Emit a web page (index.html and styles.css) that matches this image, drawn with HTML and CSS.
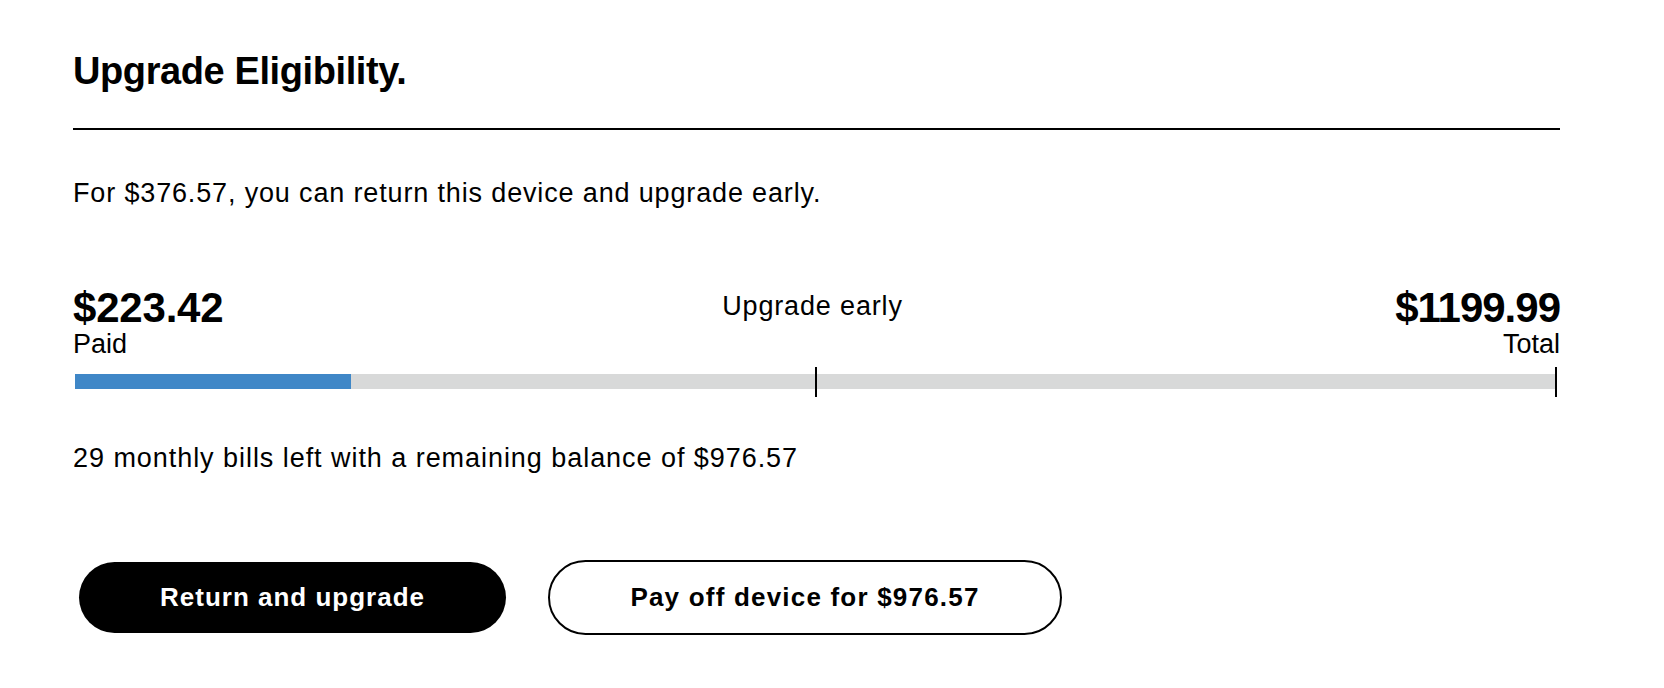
FILE: index.html
```html
<!DOCTYPE html>
<html lang="en">
<head>
<meta charset="utf-8">
<title>Upgrade Eligibility</title>
<link rel="stylesheet" href="styles.css">
</head>
<body>
<section class="card">
  <h1 class="title">Upgrade Eligibility.</h1>
  <div class="rule"></div>
  <p class="lead">For $376.57, you can return this device and upgrade early.</p>

  <div class="progress">
    <div class="amounts">
      <div class="amount-col">
        <div class="amount">$223.42</div>
        <div class="amount-label">Paid</div>
      </div>
      <div class="milestone">Upgrade early</div>
      <div class="amount-col right">
        <div class="amount narrow">$1199.99</div>
        <div class="amount-label">Total</div>
      </div>
    </div>
    <div class="bar">
      <div class="fill" style="width: 18.62%"></div>
      <span class="tick mid"></span>
      <span class="tick end"></span>
    </div>
  </div>

  <p class="remaining">29 monthly bills left with a remaining balance of $976.57</p>

  <div class="actions">
    <button class="btn btn-primary" type="button">Return and upgrade</button>
    <button class="btn btn-secondary" type="button">Pay off device for $976.57</button>
  </div>
</section>
</body>
</html>
```

FILE: styles.css
```css
html, body {
  margin: 0;
  padding: 0;
  background: #ffffff;
}

body {
  font-family: "Liberation Sans", Arial, Helvetica, sans-serif;
  color: #000000;
}

.card {
  width: 1487px;
  padding: 51px 0 0 73px;
}

.title {
  margin: 0;
  font-size: 38px;
  line-height: 40px;
  font-weight: 700;
  letter-spacing: -0.4px;
}

.rule {
  margin-top: 37px;
  height: 2px;
  background: #000000;
}

.lead {
  margin: 47px 0 0;
  font-size: 27px;
  line-height: 32px;
  letter-spacing: 0.85px;
}

.progress {
  margin-top: 78px;
}

.amounts {
  display: grid;
  grid-template-columns: 1fr auto 1fr;
  align-items: start;
}

.amount-col.right {
  text-align: right;
}

.amount {
  font-size: 42px;
  line-height: 42px;
  font-weight: 700;
  letter-spacing: -0.2px;
}

.amount.narrow {
  letter-spacing: -1px;
}

.amount-label {
  font-size: 27px;
  line-height: 30px;
}

.milestone {
  margin-top: 3px;
  margin-right: 8px;
  font-size: 27px;
  line-height: 32px;
  letter-spacing: 0.85px;
}

.bar {
  position: relative;
  margin: 15px 3px 0 2px;
  height: 15px;
  background: #d8d9d9;
}

.fill {
  height: 100%;
  background: #3f87c7;
}

.tick {
  position: absolute;
  top: -7px;
  width: 2px;
  height: 30px;
  background: #000000;
}

.tick.mid {
  left: 50%;
  margin-left: -1px;
}

.tick.end {
  right: 0;
}

.remaining {
  margin: 53px 0 0;
  font-size: 27px;
  line-height: 32px;
  letter-spacing: 0.95px;
}

.actions {
  display: flex;
  align-items: center;
  gap: 42px;
  margin-top: 86px;
  padding-left: 6px;
}

.btn {
  font-family: "Liberation Sans", Arial, Helvetica, sans-serif;
  font-size: 26px;
  font-weight: 700;
  letter-spacing: 1px;
  border-radius: 40px;
  padding: 0;
  cursor: pointer;
  box-sizing: border-box;
}

.btn-primary {
  width: 427px;
  height: 71px;
  background: #000000;
  color: #ffffff;
  border: none;
}

.btn-secondary {
  width: 514px;
  height: 75px;
  background: #ffffff;
  color: #000000;
  border: 2px solid #000000;
  letter-spacing: 1.2px;
}
```
